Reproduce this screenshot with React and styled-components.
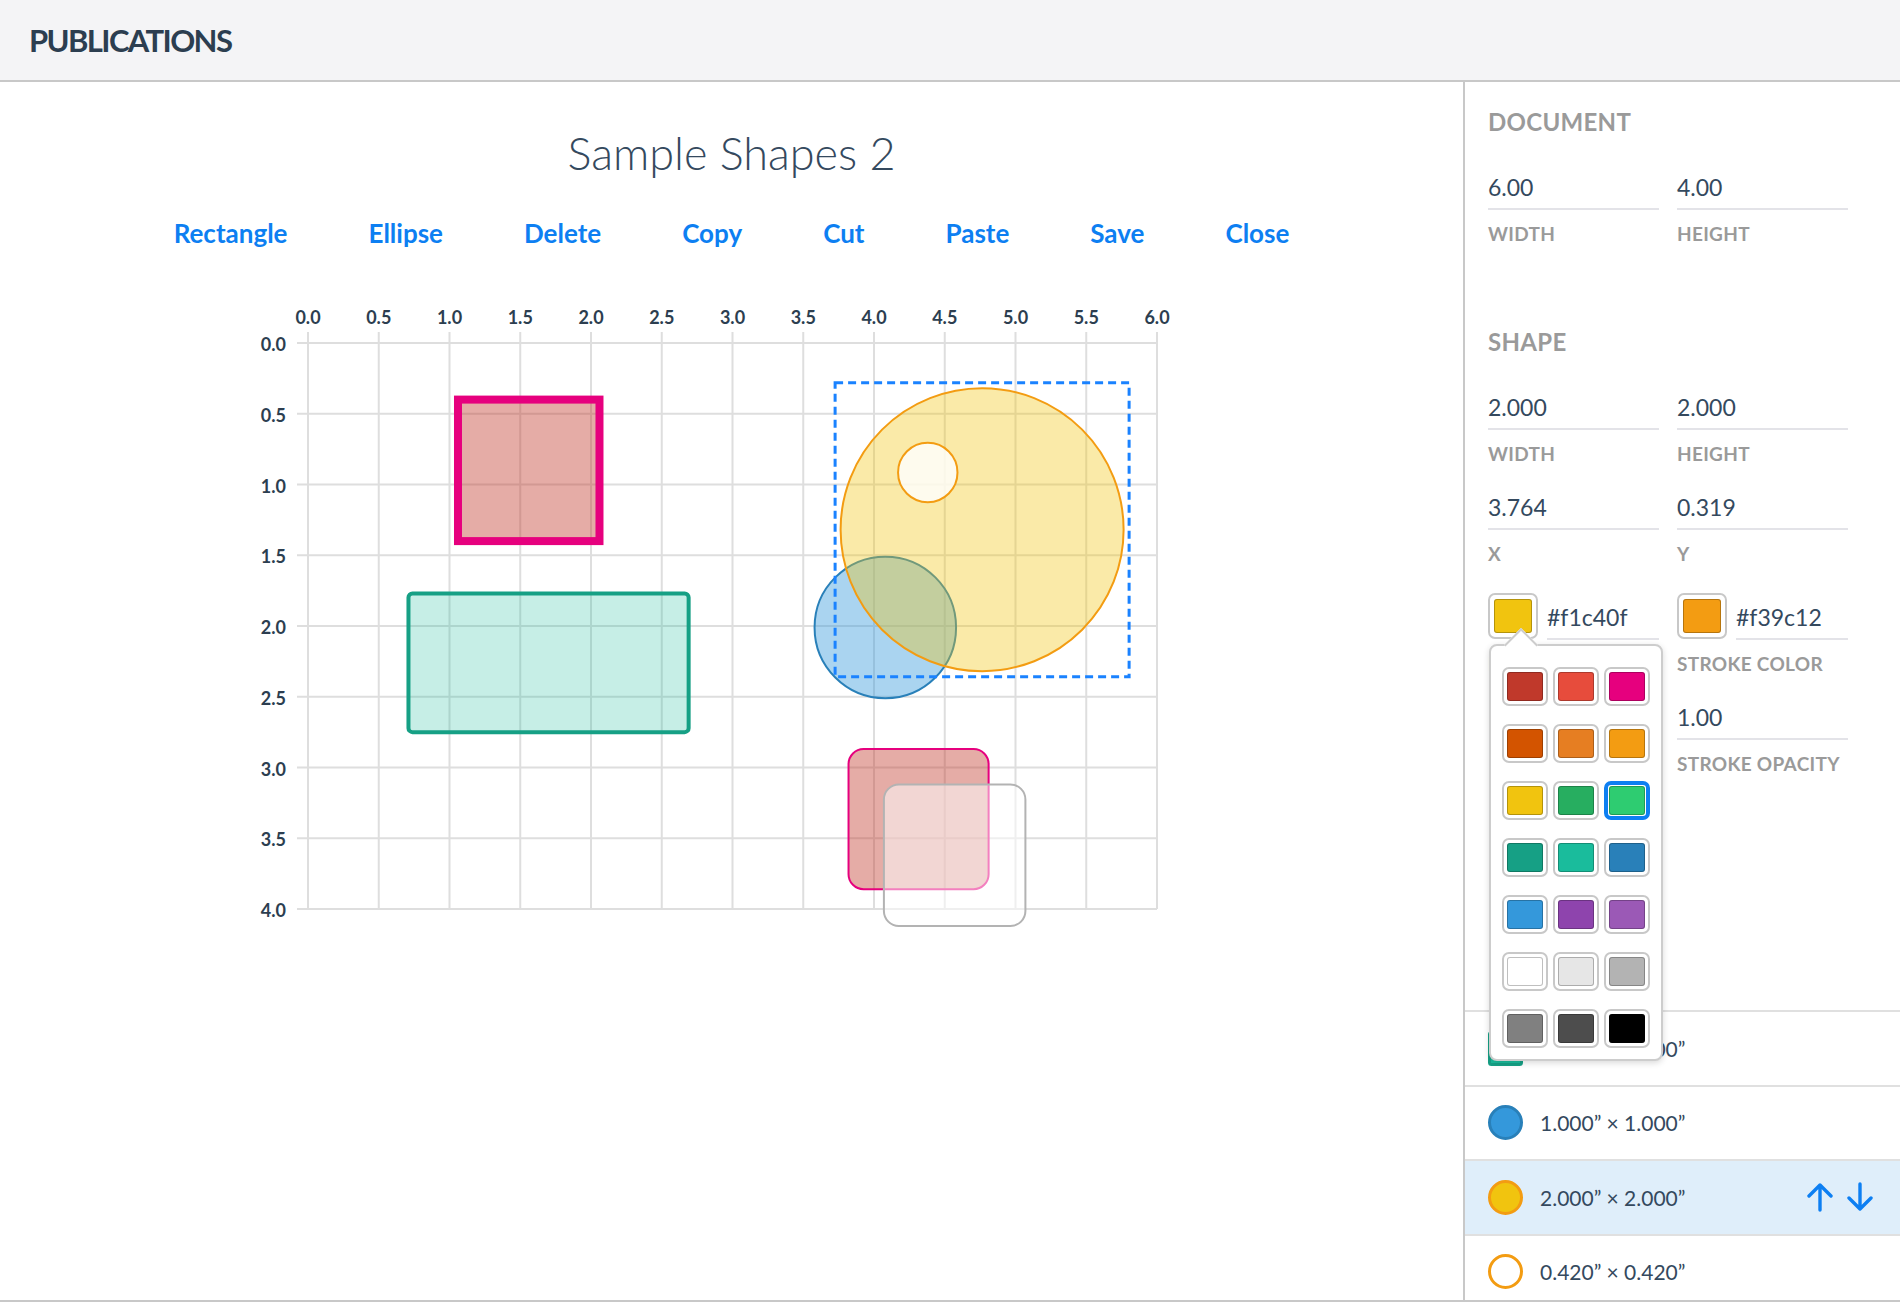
import React from 'react';
import styled, { createGlobalStyle } from 'styled-components';

const GlobalStyle = createGlobalStyle`
  html, body {
    margin: 0;
    padding: 0;
    background: #fff;
  }
  body {
    font-family: Lato, "Noto Sans", sans-serif;
    color: #2c3e50;
  }
  * {
    box-sizing: border-box;
  }
`;

// canvas geometry (inches -> px)
const U = 141.5;
const OX = 77;
const OY = 53;
const px = (v) => OX + v * U;
const py = (v) => OY + v * U;

const TOOLS = ['Rectangle', 'Ellipse', 'Delete', 'Copy', 'Cut', 'Paste', 'Save', 'Close'];

const PALETTE = [
  '#c0392b', '#e74c3c', '#e6007e',
  '#d35400', '#e67e22', '#f39c12',
  '#f1c40f', '#27ae60', '#2ecc71',
  '#16a085', '#1abc9c', '#2980b9',
  '#3498db', '#8e44ad', '#9b59b6',
  '#ffffff', '#e6e6e6', '#b3b3b3',
  '#808080', '#4d4d4d', '#000000',
];

const SHAPES = [
  { id: 1, type: 'rect', x: 1.06, y: 0.4, w: 1, h: 1, rx: 0, fill: '#c0392b', fillOpacity: 0.42, stroke: '#e6007e', sw: 8 },
  { id: 2, type: 'rect', x: 0.71, y: 1.77, w: 1.98, h: 0.98, rx: 4, fill: '#1abc9c', fillOpacity: 0.25, stroke: '#16a085', sw: 4 },
  { id: 3, type: 'ellipse', cx: 4.08, cy: 2.01, r: 0.5, fill: '#3498db', fillOpacity: 0.42, stroke: '#2980b9', sw: 2 },
  { id: 4, type: 'ellipse', cx: 4.764, cy: 1.319, r: 1, fill: '#f1c40f', fillOpacity: 0.36, stroke: '#f39c12', sw: 2 },
  { id: 5, type: 'ellipse', cx: 4.38, cy: 0.915, r: 0.21, fill: '#ffffff', fillOpacity: 0.8, stroke: '#f39c12', sw: 2 },
  { id: 6, type: 'rect', x: 3.82, y: 2.87, w: 0.99, h: 0.99, rx: 15, fill: '#c0392b', fillOpacity: 0.42, stroke: '#e6007e', sw: 2 },
  { id: 7, type: 'rect', x: 4.07, y: 3.12, w: 1, h: 1, rx: 15, fill: '#ffffff', fillOpacity: 0.5, stroke: '#b3b3b3', sw: 2 },
];

const LIST = [
  { id: 2, kind: 'rect', fill: '#1abc9c', stroke: '#16a085', text: '2.000” × 1.000”' },
  { id: 3, kind: 'circle', fill: '#3498db', stroke: '#2980b9', text: '1.000” × 1.000”' },
  { id: 4, kind: 'circle', fill: '#f1c40f', stroke: '#f39c12', text: '2.000” × 2.000”', selected: true },
  { id: 5, kind: 'circle', fill: '#ffffff', stroke: '#f39c12', text: '0.420” × 0.420”' },
];

const ShapeIcon = ({ kind, fill, stroke }) => (
  <svg width="35" height="35" viewBox="0 0 35 35">
    {kind === 'rect' ? (
      <rect x="1.5" y="1.5" width="32" height="32" rx="2" fill={fill} stroke={stroke} strokeWidth="3" />
    ) : (
      <circle cx="17.5" cy="17.5" r="16" fill={fill} stroke={stroke} strokeWidth="3" />
    )}
  </svg>
);

const Arrow = ({ down }) => (
  <svg width="26" height="30" viewBox="0 0 26 30" style={down ? { transform: 'rotate(180deg)' } : undefined}>
    <path d="M13 3 V28 M2 14 L13 3 L24 14" fill="none" stroke="#0d7ff2" strokeWidth="3.4" strokeLinecap="round" strokeLinejoin="round" />
  </svg>
);

const Canvas = () => {
  const steps = Array.from({ length: 13 }, (_, i) => i * 0.5);
  const rows = Array.from({ length: 9 }, (_, i) => i * 0.5);
  const sel = SHAPES.find((s) => s.id === 4);
  return (
    <CanvasSvg width="1001" height="650" viewBox="0 0 1001 650">
      {steps.map((v) => (
        <line key={'v' + v} x1={px(v)} x2={px(v)} y1={OY - 11} y2={py(4)} stroke="#dedede" strokeWidth="2" />
      ))}
      {rows.map((v) => (
        <line key={'h' + v} x1={OX - 11} x2={px(6)} y1={py(v)} y2={py(v)} stroke="#dedede" strokeWidth="2" />
      ))}
      {steps.map((v) => (
        <AxisText key={'tx' + v} x={px(v)} y={OY - 26} textAnchor="middle" dominantBaseline="central">
          {v.toFixed(1)}
        </AxisText>
      ))}
      {rows.map((v) => (
        <AxisText key={'ty' + v} x={OX - 22} y={py(v) + 1} textAnchor="end" dominantBaseline="central">
          {v.toFixed(1)}
        </AxisText>
      ))}
      {SHAPES.map((s) =>
        s.type === 'rect' ? (
          <rect
            key={s.id}
            x={px(s.x)}
            y={py(s.y)}
            width={s.w * U}
            height={s.h * U}
            rx={s.rx}
            fill={s.fill}
            fillOpacity={s.fillOpacity}
            stroke={s.stroke}
            strokeWidth={s.sw}
          />
        ) : (
          <circle
            key={s.id}
            cx={px(s.cx)}
            cy={py(s.cy)}
            r={s.r * U}
            fill={s.fill}
            fillOpacity={s.fillOpacity}
            stroke={s.stroke}
            strokeWidth={s.sw}
          />
        )
      )}
      <rect
        x={px(sel.cx - sel.r) - 5.5}
        y={py(sel.cy - sel.r) - 5.5}
        width={2 * sel.r * U + 11}
        height={2 * sel.r * U + 11}
        fill="none"
        stroke="#1a82ff"
        strokeWidth="3"
        strokeDasharray="8 5"
      />
    </CanvasSvg>
  );
};

const Field = ({ value, label, col }) => (
  <FieldBox col={col}>
    <ValueInput>{value}</ValueInput>
    <FieldLabel>{label}</FieldLabel>
  </FieldBox>
);

const ColorField = ({ color, label, open }) => (
  <FieldBox>
    <ColorRow>
      <Swatch>
        <SwatchFill style={{ background: color }} />
      </Swatch>
      <HexInput>{color}</HexInput>
    </ColorRow>
    <FieldLabel>{label}</FieldLabel>
    {open && (
      <Popover>
        <PopoverArrow />
        <PaletteGrid>
          {PALETTE.map((c) => (
            <PaletteCell key={c} selected={c === '#2ecc71'}>
              <SwatchFill style={{ background: c }} />
            </PaletteCell>
          ))}
        </PaletteGrid>
      </Popover>
    )}
  </FieldBox>
);

const App = () => (
  <Page>
    <GlobalStyle />
    <Header>
      <Brand>PUBLICATIONS</Brand>
    </Header>
    <Body>
      <Main>
        <Title>Sample Shapes 2</Title>
        <Toolbar>
          {TOOLS.map((t) => (
            <ToolButton key={t}>{t}</ToolButton>
          ))}
        </Toolbar>
        <Canvas />
      </Main>
      <Sidebar>
        <Section>
          <SectionTitle>Document</SectionTitle>
          <FieldGrid>
            <Field value="6.00" label="Width" />
            <Field value="4.00" label="Height" />
          </FieldGrid>
        </Section>
        <Section>
          <SectionTitle>Shape</SectionTitle>
          <FieldGrid>
            <Field value="2.000" label="Width" />
            <Field value="2.000" label="Height" />
            <Field value="3.764" label="X" />
            <Field value="0.319" label="Y" />
            <ColorField color="#f1c40f" label="Fill Color" open />
            <ColorField color="#f39c12" label="Stroke Color" />
            <Field value="1.00" label="Stroke Opacity" col={2} />
          </FieldGrid>
        </Section>
        <ShapeList>
          {LIST.map((item) => (
            <ShapeRow key={item.id} selected={item.selected}>
              <ShapeIcon kind={item.kind} fill={item.fill} stroke={item.stroke} />
              <ShapeText>{item.text}</ShapeText>
              {item.selected && (
                <RowActions>
                  <Arrow />
                  <Arrow down />
                </RowActions>
              )}
            </ShapeRow>
          ))}
        </ShapeList>
      </Sidebar>
    </Body>
  </Page>
);

// Styled Components
const Page = styled.div`
  height: 1302px;
  display: flex;
  flex-direction: column;
  border-bottom: 2px solid #c8c8c8;
  overflow: hidden;
`;

const Header = styled.header`
  height: 82px;
  flex: none;
  background: #f4f4f6;
  border-bottom: 2px solid #c8c8c8;
  display: flex;
  align-items: center;
  padding-left: 29px;
`;

const Brand = styled.h1`
  margin: 0;
  font-size: 31px;
  font-weight: 700;
  letter-spacing: -1.6px;
  color: #2c3e50;
`;

const Body = styled.div`
  flex: 1;
  min-height: 0;
  display: flex;
`;

const Main = styled.main`
  flex: 1;
  display: flex;
  flex-direction: column;
  align-items: center;
`;

const Title = styled.h2`
  margin: 43px 0 0;
  font-size: 45px;
  line-height: 56px;
  font-weight: 300;
  color: #34495e;
`;

const Toolbar = styled.nav`
  margin-top: 32px;
  display: flex;
  gap: 81px;
`;

const ToolButton = styled.button`
  background: none;
  border: none;
  padding: 0;
  font-family: inherit;
  font-size: 26px;
  font-weight: 700;
  line-height: 40px;
  color: #0d7ff2;
  cursor: pointer;
`;

const CanvasSvg = styled.svg`
  display: block;
  margin-top: 37px;
`;

const AxisText = styled.text`
  font-family: Lato, sans-serif;
  font-size: 18px;
  font-weight: 700;
  fill: #2c3e50;
`;

const Sidebar = styled.aside`
  width: 437px;
  flex: none;
  border-left: 2px solid #c8c8c8;
  padding-top: 25px;
  display: flex;
  flex-direction: column;
  overflow: hidden;
`;

const Section = styled.section`
  padding-left: 23px;
  & + & {
    margin-top: 81px;
  }
`;

const SectionTitle = styled.h3`
  margin: 0 0 29px;
  font-size: 24px;
  line-height: 30px;
  font-weight: 700;
  letter-spacing: 0.3px;
  text-transform: uppercase;
  color: #9a9a9a;
`;

const FieldGrid = styled.div`
  display: grid;
  grid-template-columns: 171px 171px;
  column-gap: 18px;
  row-gap: 20px;
`;

const FieldBox = styled.div`
  position: relative;
  grid-column: ${(p) => p.col || 'auto'};
`;

const ValueInput = styled.div`
  height: 44px;
  line-height: 42px;
  font-size: 23px;
  color: #34495e;
  border-bottom: 2px solid #e3e3e8;
`;

const FieldLabel = styled.div`
  margin-top: 12px;
  font-size: 19px;
  line-height: 24px;
  font-weight: 700;
  letter-spacing: 0.3px;
  text-transform: uppercase;
  color: #9a9a9a;
`;

const ColorRow = styled.div`
  height: 54px;
  display: flex;
  align-items: flex-end;
`;

const Swatch = styled.div`
  width: 50px;
  height: 46px;
  margin-bottom: 1px;
  flex: none;
  border: 2px solid #c8c8c8;
  border-radius: 7px;
  padding: 4px;
  background: #fff;
`;

const SwatchFill = styled.div`
  width: 100%;
  height: 100%;
  border-radius: 3px;
  box-shadow: inset 0 0 0 1px rgba(0, 0, 0, 0.25);
`;

const HexInput = styled(ValueInput)`
  flex: 1;
  margin-left: 9px;
`;

const Popover = styled.div`
  position: absolute;
  left: 1px;
  top: 58px;
  z-index: 10;
  width: 174px;
  background: #fff;
  border: 2px solid #cdcdcd;
  border-radius: 8px;
  padding: 21px 11px 11px;
  box-shadow: 0 2px 6px rgba(0, 0, 0, 0.15);
`;

const PopoverArrow = styled.div`
  position: absolute;
  left: 18px;
  top: -13px;
  width: 24px;
  height: 24px;
  background: #fff;
  border-top: 2px solid #cdcdcd;
  border-left: 2px solid #cdcdcd;
  transform: rotate(45deg);
`;

const PaletteGrid = styled.div`
  position: relative;
  display: grid;
  grid-template-columns: repeat(3, 46px);
  column-gap: 5px;
  row-gap: 18px;
`;

const PaletteCell = styled.div`
  width: 46px;
  height: 39px;
  border-radius: 7px;
  border: ${(p) => (p.selected ? '4px solid #0d7ff2' : '2px solid #c8c8c8')};
  padding: ${(p) => (p.selected ? '1px' : '3px')};
  background: #fff;
`;

const ShapeList = styled.div`
  margin-top: auto;
  height: 290px;
  flex: none;
  border-top: 2px solid #e0e0e0;
  overflow: hidden;
`;

const ShapeRow = styled.div`
  height: 74.5px;
  display: flex;
  align-items: center;
  padding: 0 27px 0 23px;
  border-bottom: 2px solid #e0e0e0;
  background: ${(p) => (p.selected ? '#dfeefa' : '#fff')};
`;

const ShapeText = styled.span`
  margin-left: 17px;
  font-size: 21px;
  color: #34495e;
`;

const RowActions = styled.div`
  margin-left: auto;
  display: flex;
  gap: 14px;
`;

export default App;
